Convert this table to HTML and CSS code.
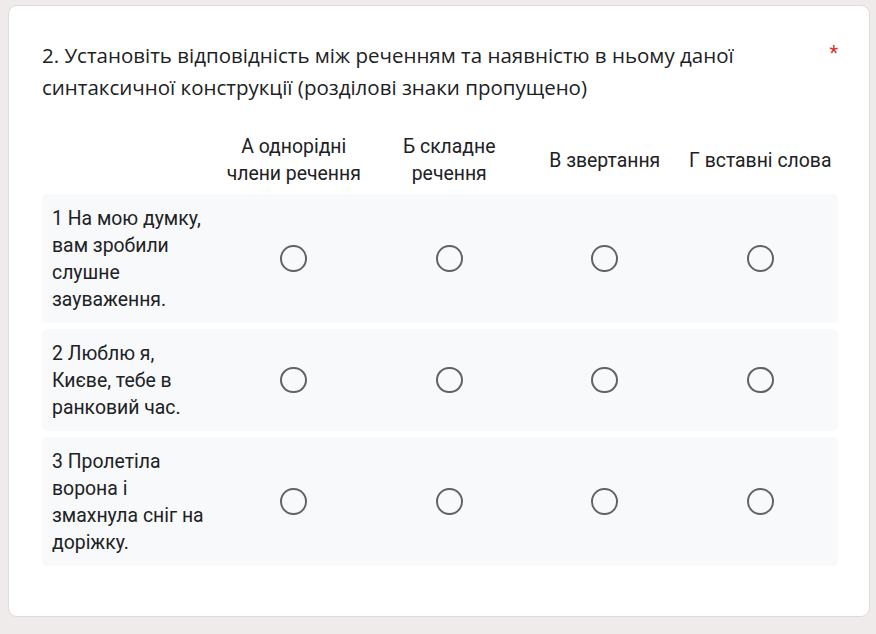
FILE: index.html
```html
<!DOCTYPE html>
<html lang="uk">
<head>
<meta charset="utf-8">
<link rel="stylesheet" href="styles.css">
</head>
<body>
<div class="card">
  <div class="title-row">
    <div class="title">2. Установіть відповідність між реченням та наявністю в ньому даної синтаксичної конструкції (розділові знаки пропущено)</div>
    <span class="req">*</span>
  </div>
  <div class="grid">
    <div class="head">
      <div></div>
      <div class="col">А однорідні члени речення</div>
      <div class="col">Б складне речення</div>
      <div class="col">В звертання</div>
      <div class="col">Г вставні слова</div>
    </div>
    <div class="row">
      <div class="label">1 На мою думку, вам зробили слушне зауваження.</div>
      <div class="cell"><span class="radio"></span></div>
      <div class="cell"><span class="radio"></span></div>
      <div class="cell"><span class="radio"></span></div>
      <div class="cell"><span class="radio"></span></div>
    </div>
    <div class="row">
      <div class="label">2 Люблю я, Києве, тебе в ранковий час.</div>
      <div class="cell"><span class="radio"></span></div>
      <div class="cell"><span class="radio"></span></div>
      <div class="cell"><span class="radio"></span></div>
      <div class="cell"><span class="radio"></span></div>
    </div>
    <div class="row">
      <div class="label">3 Пролетіла ворона і змахнула сніг на доріжку.</div>
      <div class="cell"><span class="radio"></span></div>
      <div class="cell"><span class="radio"></span></div>
      <div class="cell"><span class="radio"></span></div>
      <div class="cell"><span class="radio"></span></div>
    </div>
  </div>
</div>
</body>
</html>
```
FILE: styles.css
```css
html, body {
  margin: 0;
  background: #efebeb;
}
body {
  padding: 5px 6px 16px 8px;
  font-family: Roboto, "Liberation Sans", sans-serif;
  color: #202124;
}
.card {
  background: #fff;
  border: 1px solid #dadce0;
  border-radius: 9px;
  padding: 33px 31px 51px 33px;
  height: 612px;
  box-sizing: border-box;
}
.title-row {
  display: flex;
  align-items: flex-start;
}
.title {
  flex: 1;
  font-family: "Open Sans", sans-serif;
  font-size: 20.5px;
  line-height: 32px;
  color: #202124;
  padding-right: 60px;
}
.req {
  color: #d93025;
  font-size: 20px;
  line-height: 28px;
}
.grid {
  margin-top: 30px;
  display: flex;
  flex-direction: column;
  gap: 6px;
  font-size: 19.4px;
  line-height: 27px;
}
.head, .row {
  display: grid;
  grid-template-columns: 174px repeat(4, 1fr);
}
.head {
  align-items: center;
  margin-bottom: 1px;
}
.col {
  text-align: center;
  padding: 0 6px;
}
.row {
  background: #f8f9fa;
  border-radius: 5px;
  align-items: center;
  padding: 10.5px 0;
}
.label {
  padding: 0 10px;
}
.cell {
  display: flex;
  justify-content: center;
  align-items: center;
}
.radio {
  width: 26.6px;
  height: 26.6px;
  box-sizing: border-box;
  border: 2.6px solid #5f6368;
  border-radius: 50%;
}
```
